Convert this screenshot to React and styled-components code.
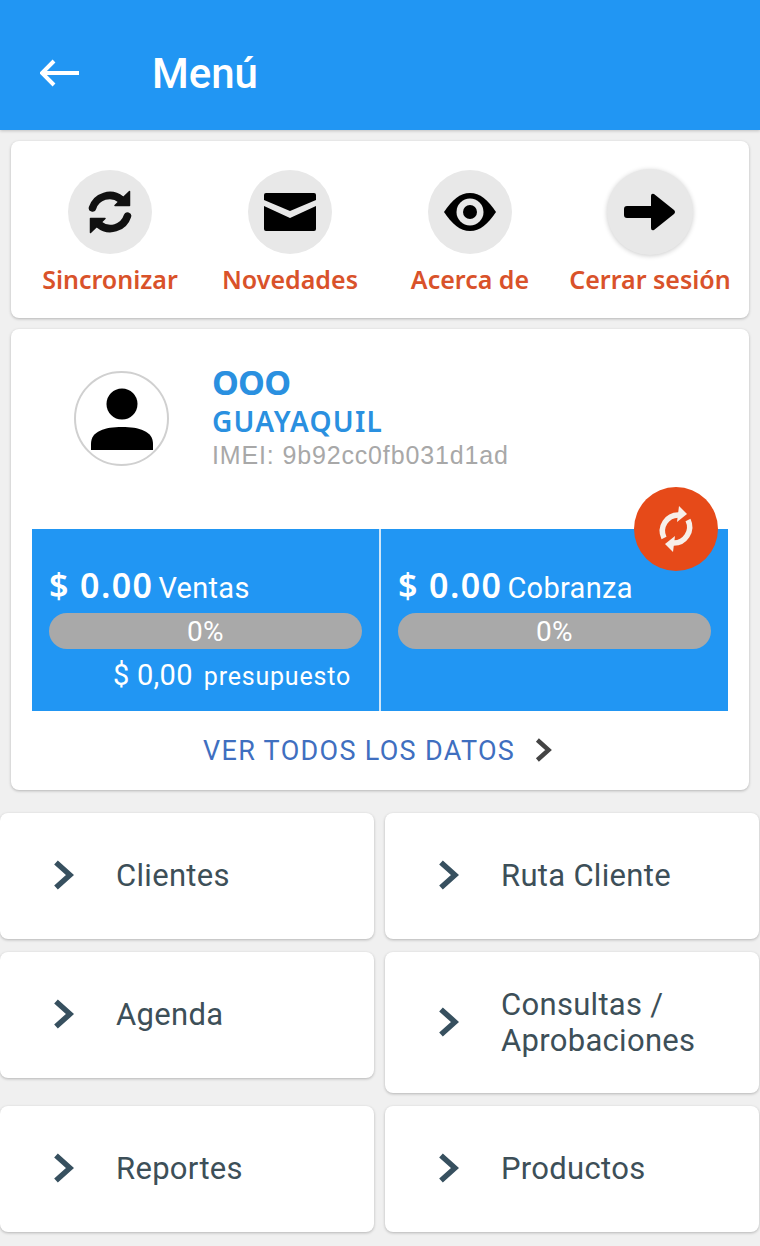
import React from 'react';
import styled, { createGlobalStyle } from 'styled-components';

const GlobalStyle = createGlobalStyle`
  html, body {
    margin: 0;
    padding: 0;
    background: #f0f0f0;
    font-family: Roboto, "Liberation Sans", sans-serif;
  }
  * { box-sizing: border-box; }
`;

const Page = styled.div`
  width: 760px;
  height: 1246px;
  overflow: hidden;
  background: #f0f0f0;
`;

const Header = styled.header`
  height: 130px;
  background: #2196f3;
  display: flex;
  align-items: center;
  padding: 16px 0 0 40px;
  gap: 72px;
  box-shadow: 0 1px 3px rgba(0, 0, 0, 0.2);
`;

const HeaderTitle = styled.h1`
  margin: 0;
  color: #fff;
  font: 500 42px Roboto, sans-serif;
`;

const Content = styled.main`
  padding: 11px 11px 0;
  display: flex;
  flex-direction: column;
  gap: 11px;
`;

const Card = styled.section`
  background: #fff;
  border-radius: 8px;
  box-shadow: 0 1px 3px rgba(0, 0, 0, 0.25);
`;

const Actions = styled(Card)`
  height: 177px;
  padding: 29px 9px 0;
  display: grid;
  grid-template-columns: repeat(4, 180px);
`;

const Action = styled.div`
  display: flex;
  flex-direction: column;
  align-items: center;
`;

const ActionCircle = styled.div`
  width: ${props => (props.$raised ? 86 : 84)}px;
  height: ${props => (props.$raised ? 86 : 84)}px;
  margin-top: ${props => (props.$raised ? -1 : 0)}px;
  margin-bottom: ${props => (props.$raised ? 10 : 11)}px;
  border-radius: 50%;
  background: #e8e8e8;
  display: flex;
  align-items: center;
  justify-content: center;
  box-shadow: ${props => (props.$raised ? '0 1px 5px rgba(0,0,0,0.2)' : 'none')};
`;

const ActionLabel = styled.span`
  color: #d9522a;
  font: 600 25px/28px "Noto Sans", sans-serif;
  white-space: nowrap;
`;

const Summary = styled(Card)`
  height: 461px;
  padding: 42px 21px 0;
  position: relative;
`;

const Profile = styled.div`
  display: flex;
  height: 158px;
  padding-left: 42px;
  gap: 43px;
`;

const Avatar = styled.div`
  width: 95px;
  height: 95px;
  border-radius: 50%;
  border: 2px solid #d0d0d0;
  display: flex;
  align-items: center;
  justify-content: center;
`;

const ProfileText = styled.div`
  display: flex;
  flex-direction: column;
  margin-top: -7px;
`;

const ProfileName = styled.div`
  color: #2a90e0;
  font: 700 34px/36px "Noto Sans", sans-serif;
  letter-spacing: -0.8px;
`;

const ProfileCity = styled.div`
  color: #2a90e0;
  font: 600 28px/32px "Noto Sans", sans-serif;
  letter-spacing: 1.2px;
  margin-top: 5px;
`;

const ProfileImei = styled.div`
  color: #a8a8a8;
  font: 400 25px/37px "Liberation Sans", sans-serif;
  letter-spacing: 0.85px;
`;

const Stats = styled.div`
  height: 182px;
  display: grid;
  grid-template-columns: 347px 2px 347px;
  background: #2196f3;
`;

const StatDivider = styled.div`
  background: #cfe6f8;
`;

const Stat = styled.div`
  padding: 36px 17px 0;
`;

const StatHead = styled.div`
  color: #fff;
  display: flex;
  align-items: baseline;
  height: 48px;
  white-space: nowrap;
`;

const StatAmount = styled.span`
  font: 600 34px/40px "Noto Sans", sans-serif;
  letter-spacing: 1.4px;
  margin-right: 5px;
`;

const StatName = styled.span`
  font: 400 29px/40px Roboto, sans-serif;
  letter-spacing: 0.3px;
`;

const Progress = styled.div`
  height: 36px;
  width: 313px;
  border-radius: 18px;
  background: #a9a9a9;
  color: #fff;
  font: 400 28px/37px Roboto, sans-serif;
  letter-spacing: 0.5px;
  text-align: center;
`;

const Budget = styled.div`
  color: #fff;
  margin-top: 8px;
  padding-right: 11px;
  display: flex;
  justify-content: flex-end;
  align-items: baseline;
  gap: 11px;
  font: 400 29px/36px Roboto, sans-serif;
  letter-spacing: 0.3px;
`;

const BudgetLabel = styled.span`
  font-size: 25px;
  letter-spacing: 0.8px;
`;

const SyncButton = styled.button`
  position: absolute;
  top: 158px;
  right: 31px;
  width: 84px;
  height: 84px;
  border: none;
  padding: 0;
  border-radius: 50%;
  background: #e64a19;
  display: flex;
  align-items: center;
  justify-content: center;
`;

const AllData = styled.div`
  height: 78px;
  display: flex;
  align-items: center;
  justify-content: center;
  gap: 20px;
  color: #3f6fc0;
  font: 400 27px Roboto, sans-serif;
  letter-spacing: 1.3px;
  padding: 2px 5px 0 0;
`;

const MenuGrid = styled.nav`
  display: grid;
  grid-template-columns: 374px 374px;
  gap: 13px 11px;
  align-items: start;
  padding-top: 23px;
`;

const MenuItem = styled.div`
  height: ${props => (props.$tall ? 141 : 126)}px;
  background: #fff;
  border-radius: 8px;
  box-shadow: 0 1px 3px rgba(0, 0, 0, 0.25);
  display: flex;
  align-items: center;
  padding-left: 53px;
  gap: 42px;
`;

const MenuLabel = styled.span`
  color: #3d4f58;
  font: 400 31px/36px Roboto, sans-serif;
  letter-spacing: 0.3px;
`;

const ChevronSvg = styled.svg`
  flex: none;
  margin-bottom: 2px;
`;

const SyncGlyph = () => (
  <svg width="44" height="44" viewBox="0 0 44 44">
    <g fill="none" stroke="#111" strokeWidth="7.5" strokeLinecap="round">
      <path d="M4.5 18 A18 18 0 0 1 33 9.5" />
      <path d="M39.5 26 A18 18 0 0 1 11 34.5" />
    </g>
    <path d="M41.5 1.5 V15.5 H27 Z" fill="#111" stroke="#111" strokeWidth="1.5" strokeLinejoin="round" />
    <path d="M2.5 42.5 V28.5 H17 Z" fill="#111" stroke="#111" strokeWidth="1.5" strokeLinejoin="round" />
  </svg>
);

const RefreshGlyph = () => (
  <svg width="40" height="50" viewBox="0 0 40 50">
    <g fill="none" stroke="#f7efe9" strokeWidth="5.5">
      <path d="M8 34 A16 16 0 0 1 23 11" />
      <path d="M32 16 A16 16 0 0 1 17 39" />
    </g>
    <path d="M23 2 L31 10 L21 18 Z" fill="#f7efe9" />
    <path d="M17 48 L9 40 L19 32 Z" fill="#f7efe9" />
  </svg>
);

const MailGlyph = () => (
  <svg width="52" height="38" viewBox="0 0 52 38">
    <path d="M2 0 H50 Q52 0 52 2 V7 L26 18 L0 7 V2 Q0 0 2 0 Z" fill="#000" />
    <path d="M0 13 L26 25 L52 13 V36 Q52 38 50 38 H2 Q0 38 0 36 Z" fill="#000" />
  </svg>
);

const EyeGlyph = () => (
  <svg width="52" height="38" viewBox="0 0 52 38">
    <path d="M0 19 C8 7 16 0 26 0 C36 0 44 7 52 19 C44 31 36 38 26 38 C16 38 8 31 0 19 Z" fill="#000" />
    <circle cx="26" cy="19" r="13.5" fill="#e8e8e8" />
    <circle cx="26" cy="19" r="7" fill="#000" />
  </svg>
);

const ArrowGlyph = () => (
  <svg width="52" height="38" viewBox="0 0 52 38">
    <path d="M3 13 H27 V3 Q27 0 30 1 L50 17 Q52 19 50 21 L30 37 Q27 38 27 35 V25 H3 Q0 25 0 22 V16 Q0 13 3 13 Z" fill="#000" />
  </svg>
);

const BackGlyph = () => (
  <svg width="40" height="28" viewBox="0 0 40 28">
    <path d="M39 14 H3 M14 2 L2 14 L14 26" fill="none" stroke="#fff" strokeWidth="4" />
  </svg>
);

const PersonGlyph = () => (
  <svg width="64" height="62" viewBox="0 0 64 62">
    <circle cx="32" cy="16" r="15.5" fill="#000" />
    <path d="M1 62 V56 C1 43 15 39 32 39 C49 39 63 43 63 56 V62 Z" fill="#000" />
  </svg>
);

const Chevron = ({ color = '#37505f', height = 30 }) => (
  <ChevronSvg width={height * 0.7} height={height} viewBox="0 0 21 30">
    <path d="M3 2.5 L17 15 L3 27.5" fill="none" stroke={color} strokeWidth="5.5" />
  </ChevronSvg>
);

const actions = [
  { label: 'Sincronizar', icon: <SyncGlyph /> },
  { label: 'Novedades', icon: <MailGlyph /> },
  { label: 'Acerca de', icon: <EyeGlyph /> },
  { label: 'Cerrar sesión', icon: <ArrowGlyph />, raised: true },
];

const menu = [
  { label: 'Clientes' },
  { label: 'Ruta Cliente' },
  { label: 'Agenda' },
  { label: <>Consultas /<br />Aprobaciones</>, tall: true },
  { label: 'Reportes' },
  { label: 'Productos' },
];

const App = () => (
  <Page>
    <GlobalStyle />
    <Header>
      <BackGlyph />
      <HeaderTitle>Menú</HeaderTitle>
    </Header>
    <Content>
      <Actions>
        {actions.map(action => (
          <Action key={action.label}>
            <ActionCircle $raised={action.raised}>{action.icon}</ActionCircle>
            <ActionLabel>{action.label}</ActionLabel>
          </Action>
        ))}
      </Actions>
      <Summary>
        <Profile>
          <Avatar><PersonGlyph /></Avatar>
          <ProfileText>
            <ProfileName>OOO</ProfileName>
            <ProfileCity>GUAYAQUIL</ProfileCity>
            <ProfileImei>IMEI: 9b92cc0fb031d1ad</ProfileImei>
          </ProfileText>
        </Profile>
        <Stats>
          <Stat>
            <StatHead><StatAmount>$ 0.00</StatAmount><StatName>Ventas</StatName></StatHead>
            <Progress>0%</Progress>
            <Budget>$ 0,00 <BudgetLabel>presupuesto</BudgetLabel></Budget>
          </Stat>
          <StatDivider />
          <Stat>
            <StatHead><StatAmount>$ 0.00</StatAmount><StatName>Cobranza</StatName></StatHead>
            <Progress>0%</Progress>
          </Stat>
        </Stats>
        <SyncButton aria-label="Actualizar">
          <RefreshGlyph />
        </SyncButton>
        <AllData>
          VER TODOS LOS DATOS
          <Chevron color="#444" height={24} />
        </AllData>
      </Summary>
    </Content>
    <MenuGrid>
      {menu.map((item, i) => (
        <MenuItem key={i} $tall={item.tall}>
          <Chevron />
          <MenuLabel>{item.label}</MenuLabel>
        </MenuItem>
      ))}
    </MenuGrid>
  </Page>
);

export default App;
